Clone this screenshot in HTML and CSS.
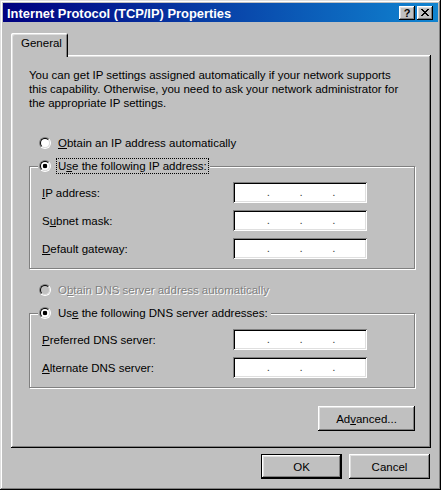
FILE: index.html
```html
<!DOCTYPE html>
<html>
<head>
<meta charset="utf-8">
<link rel="stylesheet" href="styles.css">
</head>
<body>
<div class="window">
  <div class="titlebar">
    <span class="title">Internet Protocol (TCP/IP) Properties</span>
    <div class="caption-btns">
      <span class="cbtn help">?</span>
      <span class="cbtn close"><svg width="8" height="7" viewBox="0 0 8 7" shape-rendering="crispEdges"><path d="M0 0h2v1H0z M6 0h2v1H6z M1 1h2v1H1z M5 1h2v1H5z M2 2h4v1H2z M3 3h2v1H3z M2 4h4v1H2z M1 5h2v1H1z M5 5h2v1H5z M0 6h2v1H0z M6 6h2v1H6z" fill="#000"/></svg></span>
    </div>
  </div>
  <div class="client">
    <div class="tabs"><div class="tab">General</div></div>
    <div class="panel">
      <p class="intro">You can get IP settings assigned automatically if your network supports<br>this capability. Otherwise, you need to ask your network administrator for<br>the appropriate IP settings.</p>

      <div class="opt first-opt"><span class="radio"></span><span class="lbl"><u>O</u>btain an IP address automatically</span></div>

      <fieldset class="group">
        <legend class="legend"><span class="radio checked"></span><span class="lbl focus">U<u>s</u>e the following IP address:</span></legend>
        <div class="fields">
          <div class="field-row"><span><u>I</u>P address:</span><div class="ip"><span class="seg"></span><span class="dot">.</span><span class="seg"></span><span class="dot">.</span><span class="seg"></span><span class="dot">.</span><span class="seg"></span></div></div>
          <div class="field-row"><span>S<u>u</u>bnet mask:</span><div class="ip"><span class="seg"></span><span class="dot">.</span><span class="seg"></span><span class="dot">.</span><span class="seg"></span><span class="dot">.</span><span class="seg"></span></div></div>
          <div class="field-row"><span><u>D</u>efault gateway:</span><div class="ip"><span class="seg"></span><span class="dot">.</span><span class="seg"></span><span class="dot">.</span><span class="seg"></span><span class="dot">.</span><span class="seg"></span></div></div>
        </div>
      </fieldset>

      <div class="opt disabled"><span class="radio"></span><span class="lbl">O<u>b</u>tain DNS server address automatically</span></div>

      <fieldset class="group">
        <legend class="legend"><span class="radio checked"></span><span class="lbl">Us<u>e</u> the following DNS server addresses:</span></legend>
        <div class="fields">
          <div class="field-row"><span><u>P</u>referred DNS server:</span><div class="ip"><span class="seg"></span><span class="dot">.</span><span class="seg"></span><span class="dot">.</span><span class="seg"></span><span class="dot">.</span><span class="seg"></span></div></div>
          <div class="field-row"><span><u>A</u>lternate DNS server:</span><div class="ip"><span class="seg"></span><span class="dot">.</span><span class="seg"></span><span class="dot">.</span><span class="seg"></span><span class="dot">.</span><span class="seg"></span></div></div>
        </div>
      </fieldset>

      <div class="adv-row"><button class="btn adv">Ad<u>v</u>anced...</button></div>
    </div>
    <div class="footer">
      <button class="btn default">OK</button>
      <button class="btn">Cancel</button>
    </div>
  </div>
</div>
</body>
</html>
```

FILE: styles.css
```css
html, body {
  margin: 0;
  padding: 0;
  background: #c0c0c0;
}
body {
  font-family: "Liberation Sans", Arial, sans-serif;
  font-size: 11.5px;
  color: #000;
}
.window {
  width: 441px;
  height: 490px;
  box-sizing: border-box;
  padding: 3px;
  background: #c0c0c0;
  box-shadow: inset -1px -1px #000, inset 1px 1px #dfdfdf, inset -2px -2px #808080, inset 2px 2px #fff;
  display: flex;
  flex-direction: column;
}
.titlebar {
  height: 19px;
  flex: none;
  display: flex;
  align-items: center;
  background: linear-gradient(to right, #000080, #1084d0);
  color: #fff;
  padding: 0 5px 0 4px;
}
.title {
  flex: 1;
  font-weight: bold;
  font-size: 12.9px;
  padding-top: 2px;
}
.caption-btns {
  display: flex;
  gap: 2px;
}
.cbtn {
  width: 16px;
  height: 14px;
  box-sizing: border-box;
  background: #c0c0c0;
  box-shadow: inset -1px -1px #000, inset 1px 1px #fff, inset -2px -2px #808080, inset 2px 2px #dfdfdf;
  display: flex;
  align-items: center;
  justify-content: center;
  color: #000;
}
.help {
  font-weight: bold;
  font-size: 11px;
  line-height: 14px;
}
.client {
  flex: 1;
  display: flex;
  flex-direction: column;
  padding: 11px 7px 0 8px;
}
.tabs {
  display: flex;
}
.tab {
  position: relative;
  z-index: 1;
  height: 24px;
  box-sizing: border-box;
  margin-bottom: -2px;
  padding: 4px 6px 0 10px;
  line-height: 13px;
  background: #c0c0c0;
  border-radius: 2px 2px 0 0;
  box-shadow: inset 1px 1px #fff, inset -1px 0 #000, inset 2px 2px #dfdfdf, inset -2px 0 #808080;
}
.panel {
  padding: 13px 16px 17px 18px;
  background: #c0c0c0;
  box-shadow: inset -1px -1px #000, inset 1px 1px #fff, inset -2px -2px #808080, inset 2px 2px #dfdfdf;
}
.intro {
  margin: 0;
  line-height: 14px;
}
.opt {
  display: flex;
  align-items: center;
  height: 16px;
  padding-left: 10px;
  gap: 6px;
}
.first-opt {
  margin-top: 25px;
}
.opt.disabled {
  margin-top: 13px;
  color: #808080;
  text-shadow: 1px 1px 0 #fff;
}
.lbl {
  padding: 0 1px;
  line-height: 14px;
}
.focus {
  outline: 1px dotted #000;
  outline-offset: 0;
}
.radio {
  width: 12px;
  height: 12px;
  flex: none;
  box-sizing: border-box;
  border-radius: 50%;
  border: 1px solid;
  border-color: #808080 #fff #fff #808080;
  display: flex;
  align-items: center;
  justify-content: center;
}
.radio::before {
  content: "";
  width: 10px;
  height: 10px;
  box-sizing: border-box;
  border-radius: 50%;
  border: 1px solid;
  border-color: #000 #dfdfdf #dfdfdf #000;
  background: #fff;
}
.radio.checked::before {
  background: radial-gradient(circle at center, #000 0 2px, #fff 2.6px);
}
.disabled .radio::before {
  background: #c0c0c0;
}
.group {
  margin: 7px 0 0;
  padding: 8px 0 9px;
  border: 1px solid #808080;
  box-shadow: inset 1px 1px #fff, 1px 1px #fff;
  min-width: 0;
}
.legend {
  margin-left: 8px;
  padding: 0 2px 0 1px;
  height: 16px;
  display: flex;
  align-items: center;
  gap: 6px;
  background: #c0c0c0;
}
.fields {
  display: flex;
  flex-direction: column;
  gap: 7px;
  padding: 0 47px 0 12px;
}
.field-row {
  display: flex;
  align-items: center;
  justify-content: space-between;
  height: 21px;
}
.ip {
  width: 134px;
  height: 21px;
  box-sizing: border-box;
  padding: 0 2px 0 4px;
  background: #fff;
  box-shadow: inset 1px 1px #808080, inset -1px -1px #fff, inset 2px 2px #000, inset -2px -2px #dfdfdf;
  display: flex;
  align-items: center;
  color: #444;
}
.seg {
  flex: 1;
}
.dot {
  width: 3px;
  text-align: center;
  line-height: 13px;
}
.adv-row {
  display: flex;
  justify-content: flex-end;
  margin-top: 18px;
}
.btn {
  height: 25px;
  box-sizing: border-box;
  padding: 0;
  margin: 0;
  border: none;
  background: #c0c0c0;
  font: inherit;
  color: #000;
  box-shadow: inset -1px -1px #000, inset 1px 1px #fff, inset -2px -2px #808080, inset 2px 2px #dfdfdf;
}
.adv {
  width: 97px;
}
.footer {
  display: flex;
  justify-content: flex-end;
  gap: 7px;
  margin: 6px 1px 0 0;
}
.footer .btn {
  width: 81px;
}
.btn.default {
  box-shadow: inset 0 0 0 1px #000, inset -2px -2px #000, inset 2px 2px #fff, inset -3px -3px #808080, inset 3px 3px #dfdfdf;
}
```
